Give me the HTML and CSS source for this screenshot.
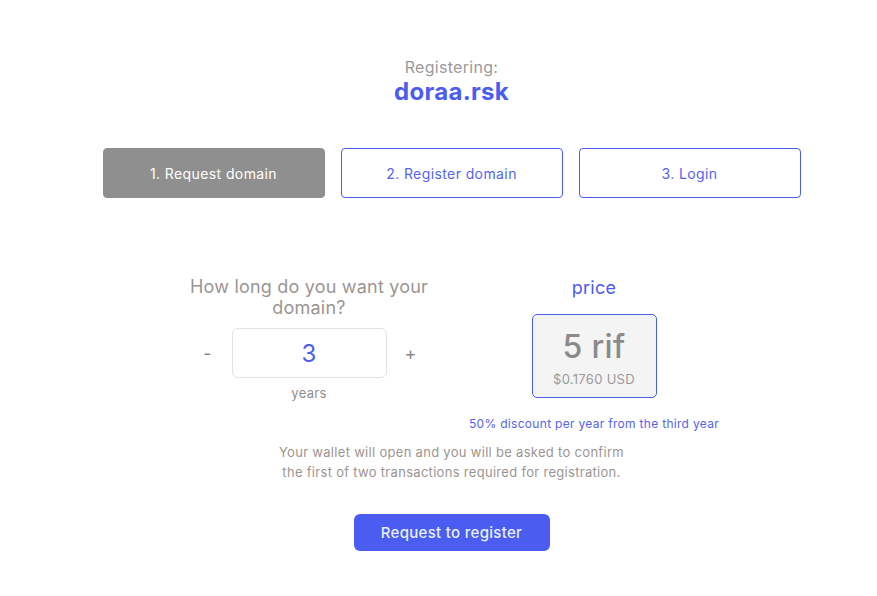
FILE: index.html
```html
<!DOCTYPE html>
<html>
<head>
<meta charset="utf-8">
<link rel="stylesheet" href="styles.css">
</head>
<body>
<main class="page">
  <header class="title">
    <div class="title-label">Registering:</div>
    <div class="title-domain">doraa.rsk</div>
  </header>
  <nav class="steps">
    <div class="step step-active">1. Request domain</div>
    <div class="step">2. Register domain</div>
    <div class="step">3. Login</div>
  </nav>
  <section class="form">
    <div class="col">
      <div class="question">How long do you want your domain?</div>
      <div class="counter">
        <span class="ctrl">-</span>
        <div class="years-box">3</div>
        <span class="ctrl">+</span>
      </div>
      <div class="years-label">years</div>
    </div>
    <div class="col">
      <div class="price-label">price</div>
      <div class="price-box">
        <div class="price-rif">5 rif</div>
        <div class="price-usd">$0.1760 USD</div>
      </div>
      <div class="discount">50% discount per year from the third year</div>
    </div>
  </section>
  <p class="note">Your wallet will open and you will be asked to confirm<br>the first of two transactions required for registration.</p>
  <button class="submit">Request to register</button>
</main>
</body>
</html>
```
FILE: styles.css
```css
* { box-sizing: border-box; }
body {
  margin: 0;
  background: #fff;
  font-family: "Inter", "Noto Sans", sans-serif;
  letter-spacing: 0.3px;
  color: #9b9b9b;
}
.page {
  padding: 57px 0 0 26px;
  display: flex;
  flex-direction: column;
  align-items: center;
}
.title { text-align: center; }
.title-label {
  font-size: 16px;
  line-height: 20px;
  color: #9a9a9a;
}
.title-domain {
  font-size: 24px;
  font-weight: 700;
  line-height: 30px;
  color: #4b5cf0;
}
.steps {
  display: flex;
  gap: 16px;
  margin-top: 41px;
}
.step {
  width: 222px;
  height: 50px;
  border: 1px solid #4b5cf0;
  border-radius: 4px;
  display: flex;
  align-items: center;
  justify-content: center;
  font-size: 14px;
  letter-spacing: 0.4px;
  color: #5564ea;
  background: #fff;
}
.step-active {
  background: #8f8f8f;
  border-color: #8f8f8f;
  color: #fff;
}
.form {
  display: flex;
  gap: 15px;
  margin-top: 78px;
}
.col {
  width: 270px;
  display: flex;
  flex-direction: column;
  align-items: center;
  text-align: center;
}
.question {
  width: 250px;
  font-size: 18px;
  line-height: 21px;
  letter-spacing: 0.2px;
  color: #9b9591;
}
.counter {
  display: flex;
  align-items: center;
  margin-top: 10px;
}
.ctrl {
  width: 48px;
  text-align: center;
  font-size: 18px;
  color: #8a8a8a;
}
.years-box {
  width: 155px;
  height: 50px;
  border: 1px solid #e2e2e2;
  border-radius: 6px;
  display: flex;
  align-items: center;
  justify-content: center;
  font-size: 24px;
  color: #4b5cf0;
}
.years-label {
  margin-top: 7px;
  font-size: 13px;
  color: #8f8f8f;
}
.price-label {
  font-size: 18px;
  line-height: 21px;
  color: #4b5cf0;
  margin-top: 1px;
}
.price-box {
  margin-top: 16px;
  width: 125px;
  height: 84px;
  border: 1px solid #4b5cf0;
  border-radius: 5px;
  background: #f4f4f4;
  display: flex;
  flex-direction: column;
  align-items: center;
  justify-content: center;
  padding-top: 3px;
}
.price-rif {
  font-size: 32px;
  line-height: 36px;
  font-weight: 500;
  color: #8a8a8a;
}
.price-usd {
  margin-top: 6px;
  font-size: 13px;
  color: #9a9a9a;
}
.discount {
  margin-top: 18px;
  font-size: 12px;
  color: #5564ea;
  white-space: nowrap;
}
.note {
  margin: 11px 0 0;
  text-align: center;
  font-size: 13px;
  line-height: 20px;
  color: #9b9591;
}
.submit {
  margin-top: 32px;
  width: 196px;
  height: 37px;
  border: none;
  border-radius: 6px;
  background: #4b5cf0;
  color: #e6f0ff;
  font-family: inherit;
  font-size: 15px;
  font-weight: 500;
  letter-spacing: 0.3px;
}
```
